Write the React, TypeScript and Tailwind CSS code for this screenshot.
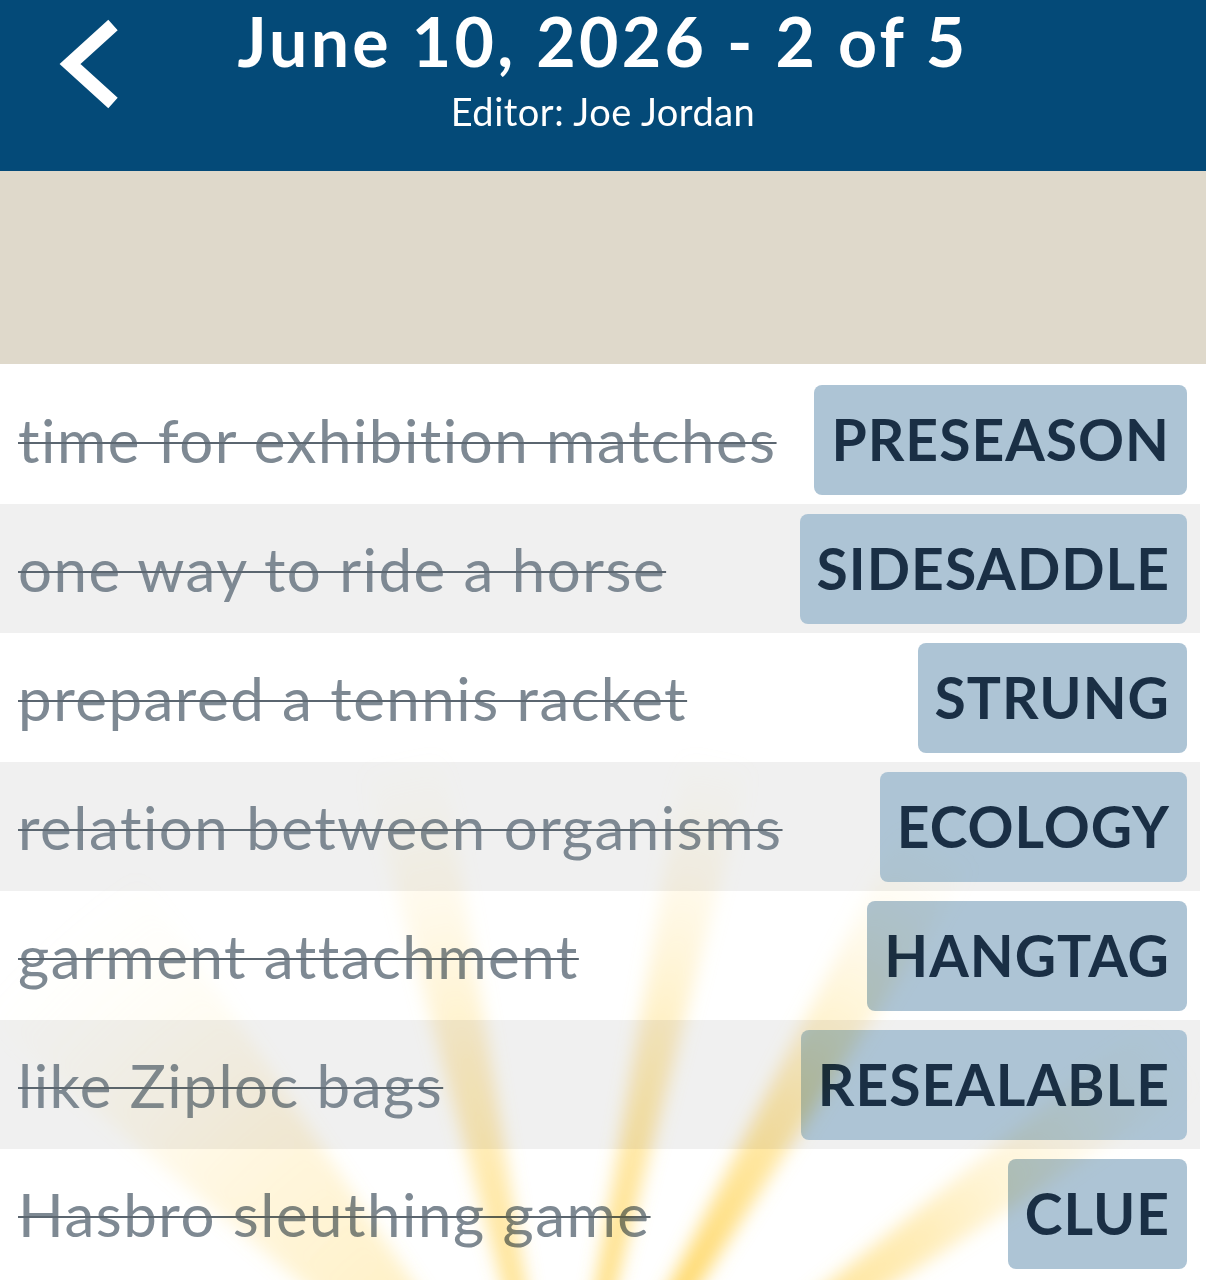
import React from "react";

const clues = [
  { clue: "time for exhibition matches", answer: "PRESEASON" },
  { clue: "one way to ride a horse", answer: "SIDESADDLE" },
  { clue: "prepared a tennis racket", answer: "STRUNG" },
  { clue: "relation between organisms", answer: "ECOLOGY" },
  { clue: "garment attachment", answer: "HANGTAG" },
  { clue: "like Ziploc bags", answer: "RESEALABLE" },
  { clue: "Hasbro sleuthing game", answer: "CLUE" },
];

// light rays fanning up from below the bottom edge
const rays = [
  { a: -42, w: 16, o: 0.4 },
  { a: -12, w: 6, o: 0.7 },
  { a: 12, w: 5, o: 0.85 },
  { a: 30, w: 6, o: 1 },
  { a: 54, w: 6, o: 0.85 },
];

function Rays() {
  const ox = 560;
  const oy = 1500;
  const r = 1000;
  return (
    <svg
      className="pointer-events-none absolute inset-0 h-full w-full mix-blend-multiply"
      viewBox="0 0 1206 1280"
      preserveAspectRatio="none"
    >
      <defs>
        <radialGradient id="rayFade" cx={ox} cy={oy} r={760} gradientUnits="userSpaceOnUse">
          <stop offset="0.25" stopColor="#ffd047" stopOpacity="0.9" />
          <stop offset="0.6" stopColor="#ffdc7a" stopOpacity="0.6" />
          <stop offset="1" stopColor="#fff1c4" stopOpacity="0" />
        </radialGradient>
        <filter id="rayBlur" x="-20%" y="-20%" width="140%" height="140%">
          <feGaussianBlur stdDeviation="9" />
        </filter>
      </defs>
      <g filter="url(#rayBlur)">
        {rays.map((ray, i) => {
          const a1 = ((ray.a - ray.w / 2) * Math.PI) / 180;
          const a2 = ((ray.a + ray.w / 2) * Math.PI) / 180;
          const p1 = `${ox + r * Math.sin(a1)},${oy - r * Math.cos(a1)}`;
          const p2 = `${ox + r * Math.sin(a2)},${oy - r * Math.cos(a2)}`;
          return (
            <polygon
              key={i}
              points={`${ox},${oy} ${p1} ${p2}`}
              fill="url(#rayFade)"
              opacity={ray.o}
            />
          );
        })}
      </g>
    </svg>
  );
}

export default function App() {
  return (
    <div
      className="relative h-[1280px] w-[1206px] overflow-hidden bg-white"
      style={{ fontFamily: "Lato, 'Open Sans', sans-serif" }}
    >
      <header className="relative flex h-[171px] flex-col items-center bg-[#044a78] text-white">
        <svg
          className="absolute left-[58px] top-[18px]"
          width="66"
          height="94"
          viewBox="0 0 66 94"
        >
          <polyline
            points="55,7 12,46 55,85"
            fill="none"
            stroke="white"
            strokeWidth="14"
            strokeLinejoin="miter"
          />
        </svg>
        <h1 className="text-[68px] font-bold leading-[82px] tracking-[3.3px]">June 10, 2026 - 2 of 5</h1>
        <p className="mt-[7px] text-[38px] leading-[44px] tracking-[0.5px]">Editor: Joe Jordan</p>
      </header>

      <div className="h-[193px] bg-[#dfd9cb]" />

      <div className="pt-[11px]">
        {clues.map((c, i) => (
          <div
            key={c.answer}
            className={`mr-[6px] flex h-[129px] items-center justify-between pl-[18px] pr-[13px] ${
              i % 2 === 1 ? "bg-[#f0f0f0]" : "bg-white"
            }`}
          >
            <span className="text-[60px] leading-none tracking-[1.5px] text-[#7e8993] line-through decoration-[#5b6670] decoration-2">
              {c.clue}
            </span>
            <span className="flex h-[110px] items-center rounded-lg bg-[#adc4d5] px-[17px] text-[57px] font-bold tracking-[1px] text-[#1a2f45]">
              {c.answer}
            </span>
          </div>
        ))}
      </div>

      <Rays />
    </div>
  );
}
